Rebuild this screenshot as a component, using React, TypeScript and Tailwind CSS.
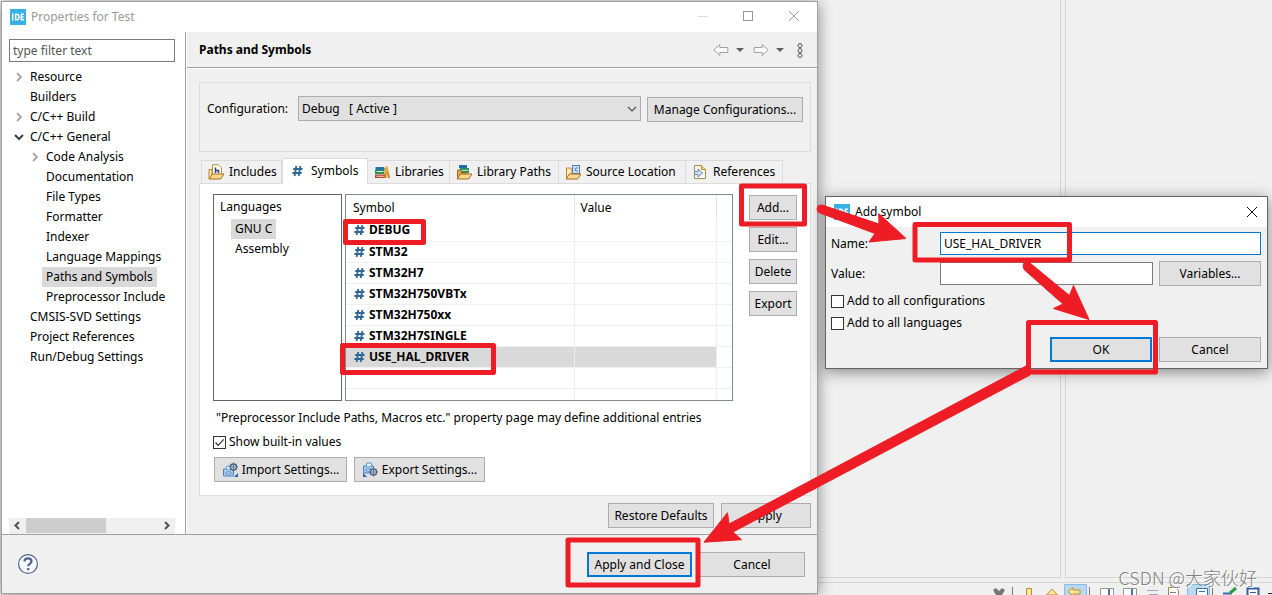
import type { ReactNode } from "react";
import clsx from "clsx";

const treeItems = [
  { label: "Resource", level: 0, arrow: "closed" },
  { label: "Builders", level: 0 },
  { label: "C/C++ Build", level: 0, arrow: "closed" },
  { label: "C/C++ General", level: 0, arrow: "open" },
  { label: "Code Analysis", level: 1, arrow: "closed" },
  { label: "Documentation", level: 1 },
  { label: "File Types", level: 1 },
  { label: "Formatter", level: 1 },
  { label: "Indexer", level: 1 },
  { label: "Language Mappings", level: 1 },
  { label: "Paths and Symbols", level: 1, selected: true },
  { label: "Preprocessor Include", level: 1 },
  { label: "CMSIS-SVD Settings", level: 0 },
  { label: "Project References", level: 0 },
  { label: "Run/Debug Settings", level: 0 },
];

const symbols = [
  "DEBUG",
  "STM32",
  "STM32H7",
  "STM32H750VBTx",
  "STM32H750xx",
  "STM32H7SINGLE",
  "USE_HAL_DRIVER",
];

interface IButtonProps {
  children: ReactNode;
  className?: string;
  primary?: boolean;
}

const Button = ({ children, className, primary }: IButtonProps) => (
  <button
    type="button"
    className={clsx(
      "flex h-[25px] shrink-0 items-center justify-center whitespace-nowrap bg-[#e1e1e1]",
      primary ? "border-2 border-[#0078d7]" : "border border-[#adadad]",
      className
    )}
  >
    {children}
  </button>
);

const IdeLogo = () => (
  <svg width="16" height="16" viewBox="0 0 16 16" className="shrink-0">
    <rect width="16" height="16" fill="#37b1e6" />
    <path
      d="M2.7 4.5v7M5.7 5.2v5.6h1c1.6 0 2.2-1 2.2-2.8s-.6-2.8-2.2-2.8zM14 5.2h-2.7v5.6H14M11.3 8h2.4"
      fill="none"
      stroke="#fff"
      strokeWidth="1.5"
    />
  </svg>
);

const TreeArrow = ({ open }: { open: boolean }) => (
  <svg width="10" height="10" viewBox="0 0 10 10" className="shrink-0">
    <path
      d={open ? "M1 3l4 4 4-4" : "M3 1l4 4-4 4"}
      fill="none"
      stroke={open ? "#404040" : "#a6a6a6"}
      strokeWidth={open ? 2 : 1.8}
    />
  </svg>
);

const HashIcon = () => (
  <svg width="11" height="12" viewBox="0 0 11 12" className="shrink-0">
    <path
      d="M4.3 1L2.6 11M8.4 1L6.7 11M1.2 4h9.3M.4 8h9.3"
      fill="none"
      stroke="#2f6795"
      strokeWidth="1.8"
    />
  </svg>
);

const FolderFront = () => (
  <path d="M1 15l3.5-5H16l-3.5 5z" fill="#fbd98a" stroke="#a8691b" />
);

const IncludesIcon = () => (
  <svg width="16" height="16" viewBox="0 0 16 16">
    <path d="M1 15V5.5h3V12" fill="#fdeab5" stroke="#b8862d" />
    <path d="M4.5 11V.8h6l3 3V11z" fill="#fff" stroke="#b8962d" />
    <path d="M7.5 3.5V9M7.5 6.5h3V9" fill="none" stroke="#26477c" strokeWidth="1.5" />
    <FolderFront />
  </svg>
);

const LibrariesIcon = () => (
  <svg width="16" height="16" viewBox="0 0 16 16">
    <path d="M1.5 3h8l1 1v2h-9z" fill="#2274a8" />
    <path d="M1 6h9v4H1z" fill="#2b9152" />
    <path d="M2.5 7.5h7" stroke="#d4efda" />
    <path d="M1 10.5h10V14H1z" fill="#b3492b" />
    <path d="M2.5 12.3h8" stroke="#f5d7c6" />
    <path d="M11.5 4.5V14M12.5 3.500L15 14" stroke="#c9851c" strokeWidth="2" />
    <path d="M12.5 2v7" stroke="#f4b63c" strokeWidth="2" />
  </svg>
);

const LibraryPathsIcon = () => (
  <svg width="16" height="16" viewBox="0 0 16 16">
    <path d="M3 1h8v3H3z" fill="#1f6faa" />
    <path d="M4 4h9v5H4z" fill="#27905b" />
    <path d="M5.5 6.3h7" stroke="#c9ecd4" />
    <path d="M1.5 14V6h3l1 3H12" fill="#e9a94b" stroke="#a8691b" />
    <FolderFront />
  </svg>
);

const SourceIcon = () => (
  <svg width="16" height="16" viewBox="0 0 16 16">
    <path d="M1.5 14V4h4l1.5 2v4" fill="#fdeab5" stroke="#b8862d" />
    <rect x="7.5" y="1.5" width="7" height="8" fill="#cfe0f7" stroke="#4b7dbe" />
    <path d="M12.5 4h-1.7c-.8 0-.8 3 0 3h1.7" fill="none" stroke="#3868b0" />
    <FolderFront />
  </svg>
);

const ReferencesIcon = () => (
  <svg width="16" height="16" viewBox="0 0 16 16">
    <path d="M2.5 1.5h7l4 4v9h-11z" fill="#f4f7fd" stroke="#a98d48" />
    <path d="M9.5 1.5v4h4" fill="#f3d58a" stroke="#b8902c" />
    <path d="M2.5 7.500H6V5l4.500 4L6 13v-2.500H2.500z" fill="#d4e0f0" stroke="#7188ab" />
  </svg>
);

const TransferIcon = ({ out }: { out?: boolean }) => (
  <svg width="17" height="16" viewBox="0 0 17 16">
    <g transform={out ? "translate(0 -3)" : undefined}>
      <path d="M1.5 7h10v7h-10z" fill="#a9cdf0" stroke="#5080b8" />
      <path d="M4 7l1-3h4l1 3M4 10h5v2H4z" fill="#e4f1fc" stroke="#5b8fca" />
    </g>
    <g transform={out ? "translate(0 5)" : undefined}>
      <circle cx="11.5" cy="5" r="3" fill="#fff" stroke="#4d6480" strokeWidth="1.4" />
      <path
        d="M11.5.5v9M7 5h9M8.3 1.8l6.400 6.400M14.7 1.8L8.3 8.2"
        stroke="#4d6480"
        strokeDasharray="1.5 1"
      />
    </g>
    <path d={out ? "M1 11v4h4z" : "M12 15h4v-4z"} fill="#2c62a2" />
  </svg>
);

const tabs = [
  { label: "Includes", icon: <IncludesIcon />, width: "w-[81px]" },
  { label: "Symbols", icon: <HashIcon />, width: "w-[86px]", active: true },
  { label: "Libraries", icon: <LibrariesIcon />, width: "w-[82px]" },
  { label: "Library Paths", icon: <LibraryPathsIcon />, width: "w-[109px]" },
  { label: "Source Location", icon: <SourceIcon />, width: "w-[127px]" },
  { label: "References", icon: <ReferencesIcon />, width: "w-[97px]" },
];

const Sidebar = () => (
  <aside className="flex w-[184px] shrink-0 flex-col border-r border-[#a0a0a0] bg-white pl-[7px] pr-[10px] pt-[7px]">
    <input
      type="text"
      aria-label="Filter"
      placeholder="type filter text"
      className="h-[23px] w-full border border-[#7a7a7a] px-[3px] placeholder:text-[#555]"
    />
    <ul className="mt-[5px] grow">
      {treeItems.map((item) => (
        <li
          key={item.label}
          className={clsx("flex h-5 items-center", item.level === 1 && "pl-4")}
        >
          <span className="flex w-[17px] shrink-0 pl-[5px]">
            {item.arrow && <TreeArrow open={item.arrow === "open"} />}
          </span>
          <span
            className={clsx(
              "whitespace-nowrap px-1 leading-5",
              item.selected && "bg-[#d9d9d9]"
            )}
          >
            {item.label}
          </span>
        </li>
      ))}
    </ul>
    <div className="flex h-4 items-start bg-[#f0f0f0]">
      <svg width="17" height="15" viewBox="0 0 17 15">
        <path d="M10 4L6.5 7.5 10 11" fill="none" stroke="#505050" strokeWidth="2" />
      </svg>
      <div className="h-[15px] w-20 bg-[#cdcdcd]" />
      <svg width="17" height="15" viewBox="0 0 17 15" className="ml-auto">
        <path d="M7 4l3.5 3.5L7 11" fill="none" stroke="#505050" strokeWidth="2" />
      </svg>
    </div>
  </aside>
);

const PageHeader = () => (
  <header className="flex h-9 items-center justify-between border-b border-[#a0a0a0] px-3">
    <h1 className="font-bold">Paths and Symbols</h1>
    <svg width="92" height="18" viewBox="0 0 92 18">
      <path d="M.8 9l6-5.5v3h8v5h-8v3z" fill="#fafafa" stroke="#a0a0a0" />
      <path d="M23 7h8l-4 4z" fill="#606060" />
      <path d="M55.2 9l-6-5.5v3h-8v5h8v3z" fill="#fafafa" stroke="#a0a0a0" />
      <path d="M63 7h8l-4 4z" fill="#606060" />
      <g fill="none" stroke="#505050">
        <circle cx="87" cy="4.500" r="2" />
        <circle cx="87" cy="9.500" r="2" />
        <circle cx="87" cy="14.500" r="2" />
      </g>
    </svg>
  </header>
);

const SymbolsTable = () => (
  <div className="h-[207px] grow overflow-hidden border border-[#828790] bg-white">
    <table className="w-full table-fixed border-collapse">
      <colgroup>
        <col className="w-[228px]" />
        <col className="w-[142px]" />
        <col />
      </colgroup>
      <thead>
        <tr className="h-[25px]">
          <th className="border-r border-[#e5e5e5] pl-[7px] text-left font-normal">Symbol</th>
          <th className="border-r border-[#e5e5e5] pl-[6px] text-left font-normal">Value</th>
          <th />
        </tr>
      </thead>
      <tbody>
        {symbols.map((symbol) => {
          const selected = symbol === "USE_HAL_DRIVER";
          return (
            <tr key={symbol} className="h-[21px] border-b border-[#f0f0f0]">
              <td
                className={clsx(
                  "border-r border-[#ecedf5] p-0 pl-[8px]",
                  selected && "bg-[#d9d9d9]"
                )}
              >
                <span className="flex items-center gap-1 font-bold leading-5">
                  <HashIcon />
                  {symbol}
                </span>
              </td>
              <td
                className={clsx("border-r border-[#ecedf5] p-0", selected && "bg-[#d9d9d9]")}
              />
              <td className="p-0" />
            </tr>
          );
        })}
        {[1, 2].map((row) => (
          <tr key={row} className="h-[21px] border-b border-[#f0f0f0]">
            <td className="border-r border-[#ecedf5] p-0" />
            <td className="border-r border-[#ecedf5] p-0" />
            <td className="p-0" />
          </tr>
        ))}
      </tbody>
    </table>
  </div>
);

const Checkbox = ({ defaultChecked }: { defaultChecked?: boolean }) => (
  <span className="grid h-[13px] w-[13px] shrink-0">
    <input
      type="checkbox"
      defaultChecked={defaultChecked}
      className="peer col-start-1 row-start-1 h-[13px] w-[13px] appearance-none border border-[#333] bg-white"
    />
    <svg
      viewBox="0 0 13 13"
      className="pointer-events-none col-start-1 row-start-1 hidden h-[13px] w-[13px] peer-checked:block"
    >
      <path d="M2.5 6.5l2.7 2.8 5.5-6" fill="none" stroke="#333" strokeWidth="1.2" />
    </svg>
  </span>
);

const TabPanel = () => (
  <section className="border border-[#dcdcdc] bg-white px-[13px] pb-[13px] pt-[10px]">
    <div className="flex items-start">
      <div className="mr-[3px] h-[207px] w-[129px] shrink-0 border border-[#646464] pl-[6px]">
        <div className="flex h-6 items-center">Languages</div>
        <ul className="pl-[11px]">
          <li className="flex h-5">
            <span className="bg-[#d9d9d9] px-1 leading-5">GNU C</span>
          </li>
          <li className="h-5 px-1 leading-5">Assembly</li>
        </ul>
      </div>
      <SymbolsTable />
      <div className="ml-4 flex w-12 shrink-0 flex-col gap-[7px] pt-px">
        <Button>Add...</Button>
        <Button>Edit...</Button>
        <Button>Delete</Button>
        <Button>Export</Button>
      </div>
    </div>
    <p className="mt-[7px] whitespace-nowrap pl-[3px] leading-5">
      "Preprocessor Include Paths, Macros etc." property page may define additional entries
    </p>
    <label className="mt-1 flex h-5 items-center gap-[3px]">
      <Checkbox defaultChecked />
      Show built-in values
    </label>
    <div className="mt-[5px] flex gap-[7px] pl-px">
      <Button className="w-[133px] gap-[3px]">
        <TransferIcon />
        Import Settings...
      </Button>
      <Button className="w-[131px] gap-[3px]">
        <TransferIcon out />
        Export Settings...
      </Button>
    </div>
  </section>
);

const PropertiesWindow = () => (
  <div className="absolute left-px top-px flex w-[817px] flex-col border border-[#a0a0a0] bg-[#f0f0f0] shadow-[0_2px_14px_rgba(0,0,0,0.45)]">
    <div className="flex h-[30px] items-center bg-white pl-2 text-[#999]">
      <IdeLogo />
      <span className="ml-[5px] grow">Properties for Test</span>
      <svg width="120" height="30" viewBox="0 0 120 30" fill="none" stroke="#999">
        <path d="M1 14.5h10" stroke="#ddd" />
        <rect x="46.5" y="9.5" width="9" height="9" />
        <path d="M92 9l10 10M102 9L92 19" />
      </svg>
    </div>
    <div className="flex">
      <Sidebar />
      <main className="min-w-0 grow border-l border-white">
        <PageHeader />
        <div className="border-t border-white pb-[6px] pl-3 pr-[6px] pt-[13px]">
          <div className="flex h-[70px] items-start border border-[#dcdcdc] pl-[7px] pt-[13px]">
            <label htmlFor="configuration" className="w-[91px] leading-[26px]">
              Configuration:
            </label>
            <span className="grid w-[343px]">
              <select
                id="configuration"
                className="col-start-1 row-start-1 h-[25px] w-full appearance-none whitespace-pre border border-[#adadad] bg-[#e1e1e1] pl-[3px]"
              >
                <option>{"Debug\u00a0\u00a0 [ Active ]"}</option>
              </select>
              <svg
                viewBox="0 0 10 6"
                className="pointer-events-none col-start-1 row-start-1 mr-1 h-[6px] w-[10px] self-center justify-self-end"
              >
                <path d="M1 1l4 4 4-4" fill="none" stroke="#505050" strokeWidth="1.2" />
              </svg>
            </span>
            <Button className="ml-[6px] mt-px w-[156px]">Manage Configurations...</Button>
          </div>
          <div role="tablist" className="mt-[6px] flex items-end pl-[2px]">
            {tabs.map((tab) => (
              <button
                key={tab.label}
                type="button"
                role="tab"
                aria-selected={!!tab.active}
                className={clsx(
                  "flex shrink-0 items-center whitespace-nowrap border-t border-[#dcdcdc]",
                  tab.active
                    ? "-mb-px h-[26px] gap-2 border-x bg-white pb-[2px] pl-[9px]"
                    : "h-[23px] gap-[5px] border-r pl-[6px] first:border-l",
                  tab.width
                )}
              >
                {tab.icon}
                {tab.label}
              </button>
            ))}
          </div>
          <TabPanel />
          <div className="mt-[7px] flex justify-end gap-[7px]">
            <Button className="w-[106px]">Restore Defaults</Button>
            <Button className="w-[90px]">Apply</Button>
          </div>
        </div>
      </main>
    </div>
    <footer className="flex h-[59px] items-center justify-between border-t border-[#a0a0a0] pl-4 pr-3">
      <button type="button" aria-label="Help">
        <svg width="20" height="20" viewBox="0 0 20 20" fill="none" stroke="#50658c">
          <circle cx="10" cy="10" r="9.4" fill="#f7f8fb" strokeWidth="1.2" />
          <path
            d="M6.5 7.5c0-4.3 7-4.3 7 0 0 2.2-3.3 2.2-3.3 4.8M10.2 14v2.2"
            strokeWidth="2.2"
          />
        </svg>
      </button>
      <div className="flex gap-[7px] pt-px">
        <Button primary className="w-[105px]">
          Apply and Close
        </Button>
        <Button className="w-[106px]">Cancel</Button>
      </div>
    </footer>
  </div>
);

const AddSymbolWindow = () => (
  <div className="absolute left-[825px] top-[196px] w-[443px] border border-[#646464] bg-[#f0f0f0] shadow-[0_3px_14px_rgba(0,0,0,0.45)]">
    <div className="flex h-[30px] items-center bg-white pl-2 pr-[9px]">
      <IdeLogo />
      <span className="ml-[5px] grow">Add symbol</span>
      <button type="button" aria-label="Close">
        <svg width="12" height="12" viewBox="0 0 12 12">
          <path d="M1 1l10 10M11 1L1 11" stroke="#111" />
        </svg>
      </button>
    </div>
    <form className="pb-[6px] pl-[5px] pr-[6px] pt-[5px]">
      <div className="flex h-6 items-start">
        <label htmlFor="symbol-name" className="w-[109px] shrink-0 leading-6">
          Name:
        </label>
        <input
          id="symbol-name"
          type="text"
          defaultValue="USE_HAL_DRIVER"
          className="h-[23px] min-w-0 grow border border-[#0078d7] bg-white px-[3px]"
        />
      </div>
      <div className="mt-[5px] flex items-center">
        <label htmlFor="symbol-value" className="w-[109px] shrink-0">
          Value:
        </label>
        <input
          id="symbol-value"
          type="text"
          className="h-[23px] min-w-0 grow border border-[#7a7a7a] bg-white px-[3px]"
        />
        <Button className="ml-[6px] w-[102px]">Variables...</Button>
      </div>
      <label className="mt-1 flex h-[22px] items-center gap-[3px]">
        <Checkbox />
        Add to all configurations
      </label>
      <label className="flex h-[22px] items-center gap-[3px]">
        <Checkbox />
        Add to all languages
      </label>
      <div className="mt-[3px] flex justify-end gap-[7px]">
        <Button primary className="w-[102px]">
          OK
        </Button>
        <Button className="w-[102px]">Cancel</Button>
      </div>
    </form>
  </div>
);

// Red marks that walk through the steps
const Annotations = () => (
  <svg
    width="1272"
    height="595"
    viewBox="0 0 1272 595"
    className="pointer-events-none absolute left-0 top-0"
    stroke="#ee1c24"
    strokeLinejoin="round"
  >
    <g fill="none" strokeWidth="5">
      <rect x="345.5" y="221.5" width="78" height="21" />
      <rect x="741.5" y="186" width="63" height="38" />
      <rect x="342.5" y="345.5" width="151" height="27" />
      <rect x="915" y="224.5" width="154.5" height="35.5" />
      <rect x="1028.5" y="322.5" width="127" height="49.5" />
      <rect x="568" y="540" width="130" height="45" />
    </g>
    <g fill="#ee1c24" strokeWidth="1">
      <circle cx="821" cy="209" r="4" />
      <path d="M822 205l57 19-.3-10.5L906 238.5l-37 3.5 6-8.5-55-20.500z" />
      <circle cx="1027" cy="266" r="4" />
      <path d="M1030 263l39.5 32.5 4-10 15.5 34-35.5-11 9.5-4.500-39-34.500z" />
      <path d="M1026 366l-297 158-1.5-11.300-23.500 29.500 37.500-2.500-8.500-7.700 297-157z" />
    </g>
  </svg>
);

const StatusIcons = () => (
  <svg width="280" height="12" viewBox="992 583 280 12" fill="none">
    <path d="M993 590l3-2 3 3 3-3 3 2-3 5h-6z" fill="#777" />
    <path d="M1012.5 587v8M1089.5 587v8M1212.5 587v8" stroke="#777" />
    <path d="M1026.5 595v-6.500h5v6.500" fill="#fbe6a6" stroke="#c98a1b" />
    <path d="M1046.5 595l5.5-6 5.5 6z" fill="#fbe6a6" stroke="#c98a1b" />
    <path d="M1064.5 595v-10.500h22v10.500" fill="#b9d9f1" stroke="#85bbe4" />
    <path d="M1068 591.5l5-4v2.500h7v4h-7v2z" fill="#fbe6a6" stroke="#c98a1b" />
    <path d="M1100.5 595v-6.500h13v6.500M1123.5 595v-6.500h13v6.500" fill="#fff" stroke="#99958a" />
    <path d="M1109 589v6M1132 589v6" stroke="#4677ae" strokeWidth="2" />
    <path d="M1147 590.5h11M1149 594.5h9" stroke="#98a7cf" />
    <path d="M1168.5 595v-7.500h7l3 3v4.500" fill="#fff" stroke="#a88b42" />
    <path d="M1170 592.5h6" stroke="#6b83ad" />
    <path d="M1187.5 595v-10.500h22v10.500" fill="#b9d9f1" stroke="#85bbe4" />
    <path d="M1196.5 595v-6.500h11v6.500M1199 591.5h6" fill="#fff" stroke="#3c70b4" />
    <path d="M1223 593.5h9" stroke="#3c70b4" strokeWidth="2" />
    <path d="M1230 593l6-5" stroke="#2d9b46" strokeWidth="3" />
    <path d="M1247.5 595v-6.500h11v6.500" fill="#fff" stroke="#365b9e" strokeWidth="2" />
    <path d="M1250 592.5h6" stroke="#365b9e" />
    <path d="M1268 593.5h4" stroke="#222" />
  </svg>
);

const App = () => (
  <div className="relative flex min-h-screen flex-col overflow-hidden bg-[#f0f0f0] font-['Noto_Sans','Noto_Sans_CJK_SC',sans-serif] text-[12px] leading-4 text-black">
    <div className="flex grow gap-1">
      <div className="w-[1061px] border-b border-r border-[#d5d5d5]" />
      <div className="grow border-b border-l border-[#d5d5d5]" />
    </div>
    <div className="mt-1 flex h-[13px] justify-end border-t border-[#d5d5d5]">
      <StatusIcons />
    </div>
    <PropertiesWindow />
    <AddSymbolWindow />
    <Annotations />
    <div className="absolute bottom-[6px] right-[15px] whitespace-nowrap font-['Noto_Sans_CJK_SC',sans-serif] text-[18px] font-light leading-6 text-[#808080] [text-shadow:1px_1px_0_#fff]">
      CSDN @大家伙好
    </div>
  </div>
);

export default App;
